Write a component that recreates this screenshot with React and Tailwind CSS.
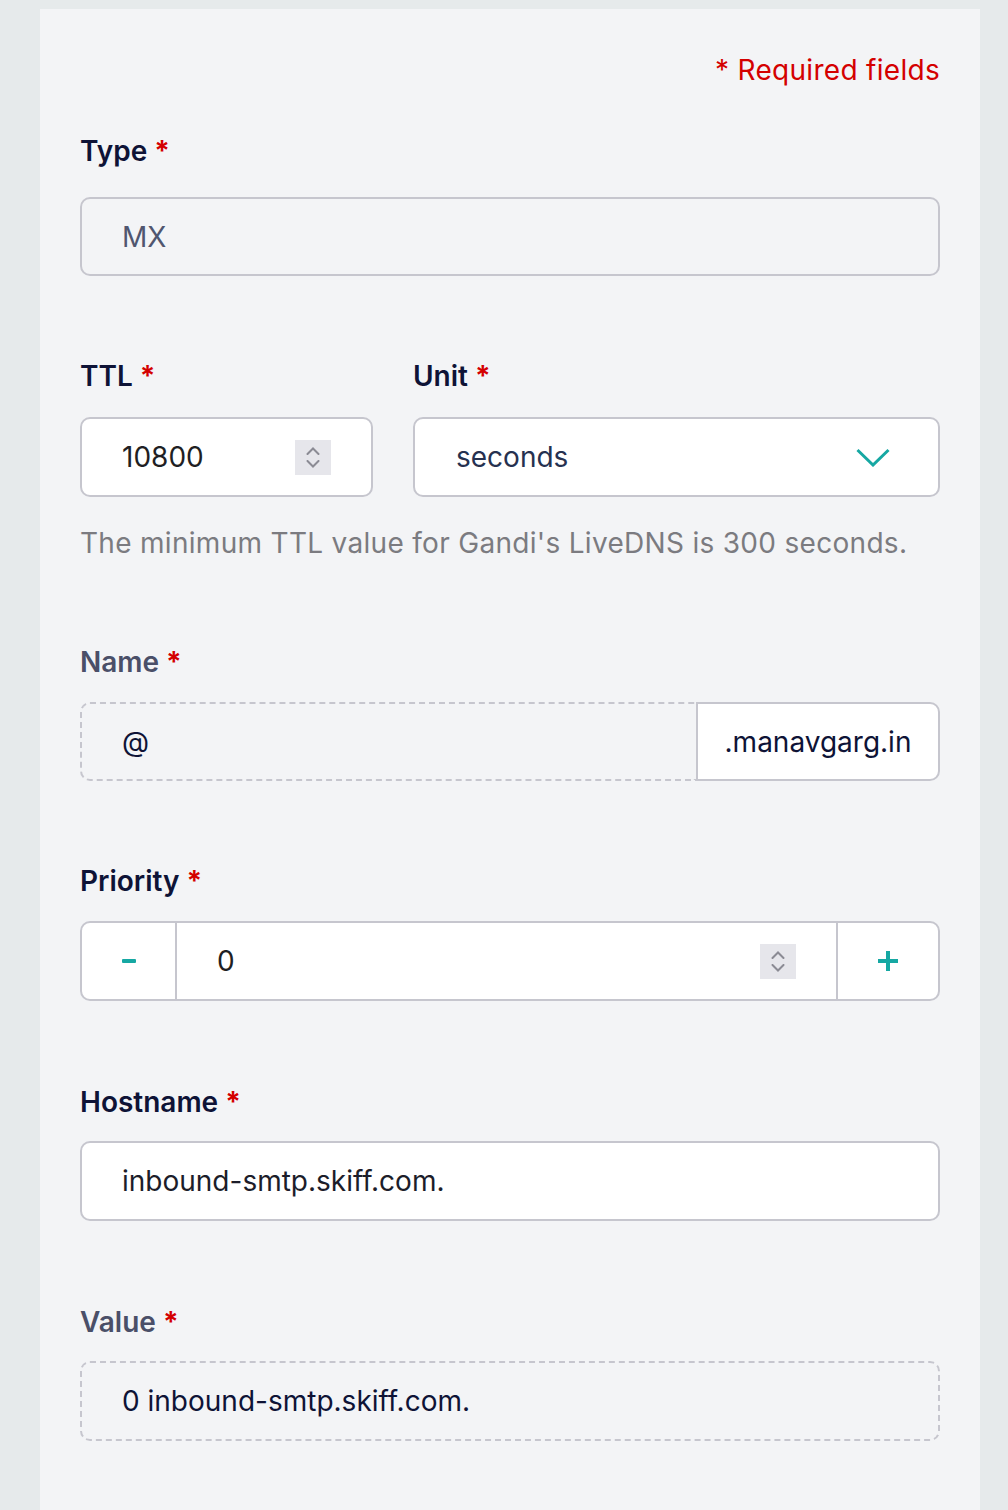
import { useState } from 'react'

function Asterisk() {
  return <span className="ml-[7px] text-[#d40000] font-bold">*</span>
}

function Label({ children, muted }) {
  return (
    <div className={`flex items-center h-[36px] text-[28px] leading-[36px] font-semibold ${muted ? 'text-[#4a4f68]' : 'text-[#0e1336]'}`}>
      {children}
      <Asterisk />
    </div>
  )
}

function Spinner() {
  return (
    <div className="flex flex-col items-center justify-center gap-[5px] w-[36px] h-[35px] bg-[#e6e6eb]">
      <svg width="14" height="8" viewBox="0 0 14 8" fill="none" stroke="#8b8b94" strokeWidth="2" strokeLinecap="round">
        <path d="M1.5 7 L7 1.5 L12.5 7" />
      </svg>
      <svg width="14" height="8" viewBox="0 0 14 8" fill="none" stroke="#8b8b94" strokeWidth="2" strokeLinecap="round">
        <path d="M1.5 1 L7 6.5 L12.5 1" />
      </svg>
    </div>
  )
}

export default function App() {
  const [priority, setPriority] = useState(0)

  return (
    <div className="min-h-[1510px] bg-[#e6eaeb] pt-[9px] px-[40px] pr-[28px] font-['Inter',sans-serif]">
      <div className="bg-[#f3f4f6] min-h-[1501px] px-[40px] pt-[43px] pb-[80px]">
        {/* Required note */}
        <div className="text-right text-[28px] leading-[36px] tracking-[0.3px] text-[#d40000]">* Required fields</div>

        {/* Type */}
        <div className="mt-[45px]">
          <Label>Type</Label>
          <div className="mt-[28px] h-[79px] flex items-center rounded-[10px] border-2 border-[#c6c6ce] px-[40px] text-[28px] text-[#50566f]">
            MX
          </div>
        </div>

        {/* TTL + Unit */}
        <div className="mt-[82px] flex gap-[40px]">
          <div className="w-[293px]">
            <Label>TTL</Label>
            <div className="mt-[23px] h-[80px] flex items-center justify-between rounded-[10px] border-2 border-[#c6c6ce] bg-white pl-[40px] pr-[40px] text-[28px] text-[#1f1f24]">
              <span>10800</span>
              <Spinner />
            </div>
          </div>
          <div className="flex-1">
            <Label>Unit</Label>
            <div className="mt-[23px] h-[80px] flex items-center justify-between rounded-[10px] border-2 border-[#c6c6ce] bg-white pl-[41px] pr-[48px] text-[28px] text-[#263150]">
              <span>seconds</span>
              <svg width="34" height="19" viewBox="0 0 34 19" fill="none" stroke="#16a8a3" strokeWidth="3">
                <path d="M1.5 2 L17 17 L32.5 2" />
              </svg>
            </div>
          </div>
        </div>
        <p className="mt-[28px] text-[28px] leading-[36px] tracking-[0.3px] text-[#7b7b80]">
          The minimum TTL value for Gandi's LiveDNS is 300 seconds.
        </p>

        {/* Name */}
        <div className="mt-[83px]">
          <Label muted>Name</Label>
          <div className="mt-[22px] h-[79px] flex">
            <div className="flex-1 flex items-center rounded-l-[10px] border-2 border-r-0 border-dashed border-[#c6c6ce] px-[40px] text-[28px] text-[#0e1336]">
              @
            </div>
            <div className="w-[244px] flex items-center justify-center rounded-r-[10px] border-2 border-[#c6c6ce] bg-white text-[28px] text-[#0e1336]">
              .manavgarg.in
            </div>
          </div>
        </div>

        {/* Priority */}
        <div className="mt-[82px]">
          <Label>Priority</Label>
          <div className="mt-[22px] h-[80px] flex rounded-[10px] border-2 border-[#c6c6ce] bg-white overflow-hidden">
            <button
              onClick={() => setPriority(p => p - 1)}
              className="w-[95px] flex items-center justify-center border-r-2 border-[#c6c6ce]"
            >
              <span className="block w-[14px] h-[4px] rounded-[1px] bg-[#16a8a3]" />
            </button>
            <div className="flex-1 flex items-center justify-between pl-[40px] pr-[40px] text-[28px] text-[#1f1f24]">
              <span>{priority}</span>
              <Spinner />
            </div>
            <button
              onClick={() => setPriority(p => p + 1)}
              className="w-[102px] flex items-center justify-center border-l-2 border-[#c6c6ce]"
            >
              <svg width="22" height="22" viewBox="0 0 22 22" fill="none" stroke="#16a8a3" strokeWidth="4">
                <path d="M11 1 V21 M1 11 H21" />
              </svg>
            </button>
          </div>
        </div>

        {/* Hostname */}
        <div className="mt-[83px]">
          <Label>Hostname</Label>
          <div className="mt-[21px] h-[80px] flex items-center rounded-[10px] border-2 border-[#c6c6ce] bg-white px-[40px] text-[28px] text-[#1c1d2a]">
            inbound-smtp.skiff.com.
          </div>
        </div>

        {/* Value */}
        <div className="mt-[83px]">
          <Label muted>Value</Label>
          <div className="mt-[21px] h-[80px] flex items-center rounded-[10px] border-2 border-dashed border-[#c6c6ce] px-[40px] text-[28px] text-[#0e1336]">
            0 inbound-smtp.skiff.com.
          </div>
        </div>
      </div>
    </div>
  )
}
